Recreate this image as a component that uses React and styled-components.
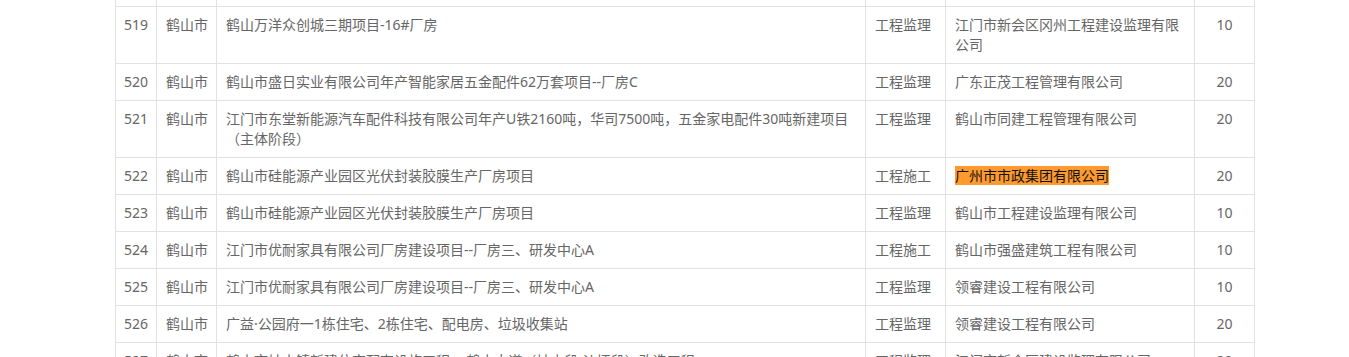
import styled, { createGlobalStyle } from "styled-components";

const Global = createGlobalStyle`
body {
  margin: 0;
  background: #fff;
  font-family: "Noto Sans", "Noto Sans CJK SC", sans-serif;
  overflow: hidden;
}
`

const Page = styled.div`
padding-left: 115px;
margin-top: -31px;
`

const Table = styled.table`
border-collapse: collapse;
table-layout: fixed;
width: 1140px;
font-size: 14px;
line-height: 20px;
color: #666;
`

const Td = styled.td`
border: 1px solid #e2e2e2;
padding: 8px 9px;
vertical-align: top;
text-align: ${p => (p.$center ? "center" : "left")};
padding-left: ${p => (p.$tight ? "8px" : "9px")};
white-space: ${p => (p.$nowrap ? "nowrap" : "normal")};
overflow: hidden;
`

const Mark = styled.span`
background: #ff9a2e;
color: #111;
`

const widths = [41, 60, 649, 80, 249, 60];

const rows = [
  ["518", "鹤山市", "鹤山市共和镇工业园区标准厂房建设项目", "工程监理", "鹤山市工程建设监理有限公司", "10"],
  ["519", "鹤山市", "鹤山万洋众创城三期项目-16#厂房", "工程监理", "江门市新会区冈州工程建设监理有限公司", "10"],
  ["520", "鹤山市", "鹤山市盛日实业有限公司年产智能家居五金配件62万套项目--厂房C", "工程监理", "广东正茂工程管理有限公司", "20"],
  ["521", "鹤山市", "江门市东堂新能源汽车配件科技有限公司年产U铁2160吨，华司7500吨，五金家电配件30吨新建项目（主体阶段）", "工程监理", "鹤山市同建工程管理有限公司", "20"],
  ["522", "鹤山市", "鹤山市硅能源产业园区光伏封装胶膜生产厂房项目", "工程施工", "广州市市政集团有限公司", "20", true],
  ["523", "鹤山市", "鹤山市硅能源产业园区光伏封装胶膜生产厂房项目", "工程监理", "鹤山市工程建设监理有限公司", "10"],
  ["524", "鹤山市", "江门市优耐家具有限公司厂房建设项目--厂房三、研发中心A", "工程施工", "鹤山市强盛建筑工程有限公司", "10"],
  ["525", "鹤山市", "江门市优耐家具有限公司厂房建设项目--厂房三、研发中心A", "工程监理", "领睿建设工程有限公司", "10"],
  ["526", "鹤山市", "广益·公园府一1栋住宅、2栋住宅、配电房、垃圾收集站", "工程监理", "领睿建设工程有限公司", "20"],
  ["527", "鹤山市", "鹤山市址山镇新建住宅配套设施工程 -- 鹤山大道（址山段-沙坪段）改造工程", "工程监理", "江门市新会区建设监理有限公司", "20"],
];

export default function App() {
  return (
    <Page>
      <Global />
      <Table>
        <colgroup>
          {widths.map((w, i) => <col key={i} style={{ width: w }} />)}
        </colgroup>
        <tbody>
          {rows.map(r => (
            <tr key={r[0]}>
              <Td $tight>{r[0]}</Td>
              <Td $nowrap>{r[1]}</Td>
              <Td>{r[2]}</Td>
              <Td $nowrap>{r[3]}</Td>
              <Td>{r[6] ? <Mark>{r[4]}</Mark> : r[4]}</Td>
              <Td $center>{r[5]}</Td>
            </tr>
          ))}
        </tbody>
      </Table>
    </Page>
  );
}
